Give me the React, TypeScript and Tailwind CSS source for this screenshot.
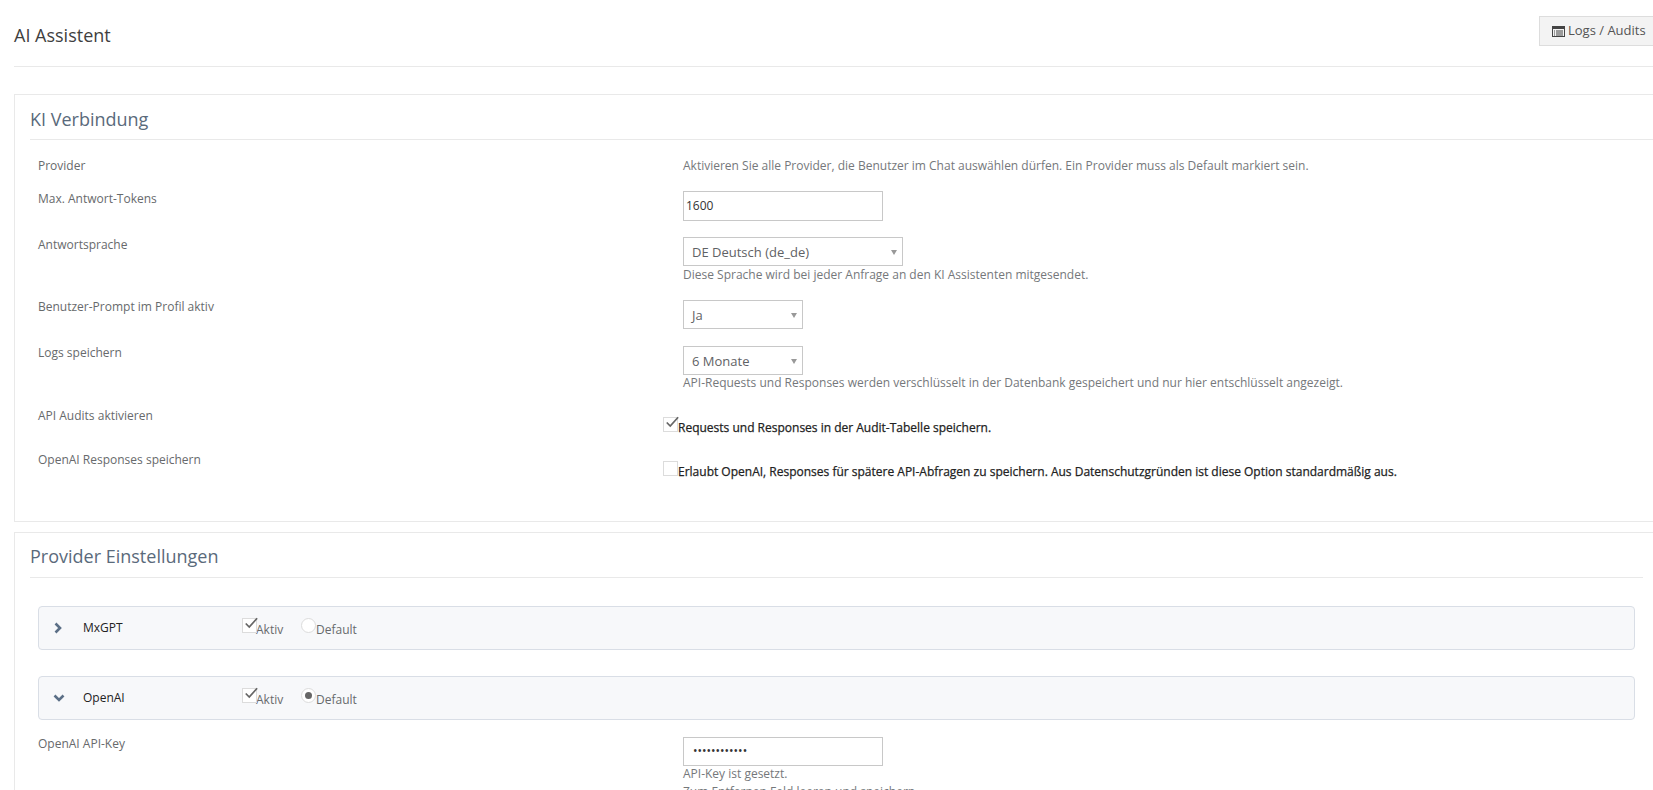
import { ReactNode } from "react";

function Caret() {
  return (
    <span className="absolute right-[5px] top-[12px] h-0 w-0 border-x-[3.5px] border-t-[5px] border-x-transparent border-t-[#999]" />
  );
}

function Select({ value, width }: { value: string; width: string }) {
  return (
    <div
      className={`relative h-[29px] ${width} border border-[#c8c8c8] bg-white pl-[8px] text-[13px] leading-[28px] text-[#5f6265]`}
    >
      {value}
      <Caret />
    </div>
  );
}

function Help({ children }: { children: ReactNode }) {
  return <div className="text-[12px] leading-[18px] text-[#75787b]">{children}</div>;
}

function Row({
  label,
  className,
  children,
}: {
  label: string;
  className: string;
  children: ReactNode;
}) {
  return (
    <div className={`flex ${className}`}>
      <div className="w-[645px] shrink-0 text-[12px] leading-[18px] text-[#676a6c]">{label}</div>
      <div className="min-w-0 flex-1">{children}</div>
    </div>
  );
}

function Tick() {
  return (
    <svg viewBox="0 0 16 14" className="absolute -top-[2px] left-[1px] h-[13px] w-[14px]">
      <path d="M2 7 L6 11 L15 1" fill="none" stroke="#666" strokeWidth="2" />
    </svg>
  );
}

function CheckRow({ checked, text }: { checked: boolean; text: string }) {
  return (
    <div className="-ml-[20px] flex items-start">
      <span className="relative mt-[10px] h-[15px] w-[15px] shrink-0 border border-[#dcdcdc] bg-white">
        {checked && <Tick />}
      </span>
      <span className="mt-[12px] whitespace-nowrap text-[12px] leading-[18px] text-[#222] [-webkit-text-stroke:0.25px_#222]">
        {text}
      </span>
    </div>
  );
}

function Chevron({ open }: { open: boolean }) {
  return (
    <svg viewBox="0 0 12 12" className="h-[12px] w-[12px]">
      <path
        d={open ? "M1.5 3.5 L6 8 L10.5 3.5" : "M3.5 1.5 L8 6 L3.5 10.5"}
        fill="none"
        stroke="#5b6f86"
        strokeWidth="2.6"
      />
    </svg>
  );
}

function AccordionHead({
  name,
  open,
  isDefault,
}: {
  name: string;
  open: boolean;
  isDefault: boolean;
}) {
  return (
    <div className="flex h-[44px] items-start rounded-[4px] border border-[#d9dee6] bg-[#f7f8fa]">
      <div className={`${open ? "ml-[14px] w-[30px]" : "ml-[13px] w-[31px]"} mt-[15px]`}>
        <Chevron open={open} />
      </div>
      <div className="mt-[12px] w-[159px] text-[12px] font-medium leading-[18px] text-[#222]">{name}</div>
      <div className="mt-[12px] flex">
        <span className="relative -mt-[1px] h-[15px] w-[15px] border border-[#dcdcdc] bg-white">
          <Tick />
        </span>
        <span className="-ml-[1px] mt-[2px] w-[45px] text-[12px] leading-[18px] text-[#676a6c]">Aktiv</span>
        <span className="relative -mt-[1px] h-[15px] w-[15px] rounded-full border border-[#dcdcdc] bg-white">
          {isDefault && <span className="absolute left-[3px] top-[3px] h-[7px] w-[7px] rounded-full bg-[#666]" />}
        </span>
        <span className="mt-[2px] text-[12px] leading-[18px] text-[#676a6c]">Default</span>
      </div>
    </div>
  );
}

function ListIcon() {
  return (
    <svg viewBox="0 0 13 11" className="h-[11px] w-[13px]">
      <rect x="0.5" y="0.5" width="12" height="10" fill="none" stroke="#444" />
      <rect x="0" y="0" width="13" height="3" fill="#444" />
      <path d="M2 5h1M2 7h1M4 5h7M4 7h7M2 9h1M4 9h7" stroke="#444" />
    </svg>
  );
}

export default function App() {
  return (
    <div className="h-screen overflow-hidden bg-white pl-[14px] font-['Open_Sans',sans-serif]">
      <div className="-mr-[2px]">
        {/* Page title */}
        <div className="flex h-[67px] items-start justify-between border-b border-[#e9e9e9]">
          <h1 className="mt-[23px] text-[18px] leading-[24px] text-[#3f3f3f]">AI Assistent</h1>
          <button
            type="button"
            className="mt-[16px] flex h-[30px] w-[116px] items-center gap-[3px] border border-[#ddd] bg-[#f3f3f3] pl-[12px] text-[13px] text-[#555]"
          >
            <ListIcon />
            Logs / Audits
          </button>
        </div>

        {/* KI Verbindung */}
        <section className="mt-[27px] h-[428px] border border-[#e9e9e9] pl-[15px]">
          <h2 className="flex h-[45px] items-end border-b border-[#e9e9e9] pb-[8px] text-[18px] leading-[24px] text-[#5a6a7b]">
            KI Verbindung
          </h2>
          <div className="mt-[17px] pl-[8px]">
            <Row label="Provider" className="mb-[15px]">
              <Help>Aktivieren Sie alle Provider, die Benutzer im Chat auswählen dürfen. Ein Provider muss als Default markiert sein.</Help>
            </Row>
            <Row label="Max. Antwort-Tokens" className="mb-[15px]">
              <div className="mt-[1px] h-[30px] w-[200px] border border-[#c8c8c8] bg-white pl-[2px] text-[12px] leading-[28px] text-[#333]">
                1600
              </div>
            </Row>
            <Row label="Antwortsprache" className="mb-[14px]">
              <div className="mt-[1px]">
                <Select value="DE Deutsch (de_de)" width="w-[220px]" />
                <Help>Diese Sprache wird bei jeder Anfrage an den KI Assistenten mitgesendet.</Help>
              </div>
            </Row>
            <Row label="Benutzer-Prompt im Profil aktiv" className="mb-[15px]">
              <div className="mt-[2px]">
                <Select value="Ja" width="w-[120px]" />
              </div>
            </Row>
            <Row label="Logs speichern" className="mb-[15px]">
              <div className="mt-[2px]">
                <Select value="6 Monate" width="w-[120px]" />
                <div className="-mt-[1px]">
                  <Help>API-Requests und Responses werden verschlüsselt in der Datenbank gespeichert und nur hier entschlüsselt angezeigt.</Help>
                </div>
              </div>
            </Row>
            <Row label="API Audits aktivieren" className="mb-[14px]">
              <CheckRow checked text="Requests und Responses in der Audit-Tabelle speichern." />
            </Row>
            <Row label="OpenAI Responses speichern" className="">
              <CheckRow
                checked={false}
                text="Erlaubt OpenAI, Responses für spätere API-Abfragen zu speichern. Aus Datenschutzgründen ist diese Option standardmäßig aus."
              />
            </Row>
          </div>
        </section>

        {/* Provider Einstellungen */}
        <section className="mt-[10px] border border-[#e9e9e9] pl-[15px]">
          <h2 className="flex h-[45px] w-[1613px] items-end border-b border-[#e9e9e9] pb-[9px] text-[18px] leading-[24px] text-[#5a6a7b]">
            Provider Einstellungen
          </h2>
          <div className="mt-[28px] w-[1605px] pl-[8px]">
            <AccordionHead name="MxGPT" open={false} isDefault={false} />
            <div className="mt-[26px]">
              <AccordionHead name="OpenAI" open isDefault />
            </div>
            <div className="mt-[15px]">
              <Row label="OpenAI API-Key" className="">
                <div className="mt-[2px] h-[29px] w-[200px] border border-[#c8c8c8] bg-white pl-[9px] text-[12px] leading-[26px] text-[#333]">
                  ••••••••••••
                </div>
                <div className="-mt-[1px]">
                  <Help>API-Key ist gesetzt.</Help>
                  <Help>Zum Entfernen Feld leeren und speichern.</Help>
                </div>
              </Row>
            </div>
          </div>
        </section>
      </div>
    </div>
  );
}
